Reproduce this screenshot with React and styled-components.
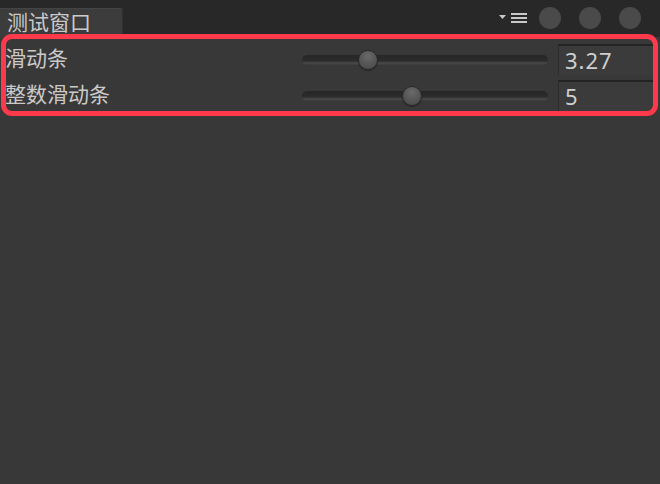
import React from "react";
import styled, { createGlobalStyle } from "styled-components";

const GlobalStyle = createGlobalStyle`
  html, body {
    margin: 0;
    padding: 0;
    background: #383838;
  }
  body {
    font-family: "Noto Sans", "Noto Sans CJK SC", sans-serif;
  }
`;

const Window = styled.div`
  position: relative;
  width: 660px;
  height: 484px;
  background: #383838;
  overflow: hidden;
`;

const Header = styled.div`
  height: 37px;
  background: #282828;
  display: flex;
  align-items: flex-end;
  justify-content: space-between;
`;

const Tab = styled.div`
  width: 123px;
  height: 29px;
  background: #3c3c3c;
  border-top: 1px solid #444;
  border-right: 1px solid #303030;
  border-top-right-radius: 3px;
  box-sizing: border-box;
  display: flex;
  align-items: center;
  padding-left: 7px;
  padding-bottom: 4px;
  color: #cacaca;
  font-size: 21px;
  line-height: 1;
  font-family: "Noto Sans CJK SC", sans-serif;
`;

const Controls = styled.div`
  display: flex;
  align-items: center;
  gap: 18px;
  height: 37px;
  padding-right: 19px;
  padding-bottom: 2px;
  box-sizing: border-box;
`;

const MenuIcon = styled.svg`
  margin-right: -6px;
`;

const Dot = styled.div`
  width: 22px;
  height: 22px;
  border-radius: 50%;
  background: #4a4a4a;
`;

const Rows = styled.div`
  display: flex;
  flex-direction: column;
  gap: 5px;
  padding-top: 7px;
`;

const Row = styled.div`
  display: flex;
  align-items: center;
  height: 31px;
`;

const Label = styled.div`
  width: 302px;
  padding-left: 5px;
  padding-bottom: 4px;
  box-sizing: border-box;
  color: #cacaca;
  font-size: 21px;
  line-height: 1;
  font-family: "Noto Sans CJK SC", sans-serif;
`;

const Track = styled.div`
  position: relative;
  width: 246px;
  height: 10px;
  border-radius: 5px;
  background: linear-gradient(#262626 0%, #2c2c2c 60%, #4a4a4a 80%, #3a3a3a 100%);
`;

const Thumb = styled.div`
  position: absolute;
  top: 50%;
  width: 20px;
  height: 20px;
  margin-left: -10px;
  margin-top: -10px;
  border-radius: 50%;
  box-sizing: border-box;
  border: 1px solid #2a2a2a;
  background: radial-gradient(circle at 50% 30%, #6a6a6a 0%, #555 55%, #474747 100%);
  box-shadow: 0 1px 1px rgba(0, 0, 0, 0.4);
`;

const Field = styled.div`
  margin-left: 10px;
  width: 97px;
  height: 31px;
  box-sizing: border-box;
  background: #3b3b3b;
  border-top: 2px solid #232323;
  border-left: 1px solid #2a2a2a;
  padding-left: 6px;
  padding-bottom: 2px;
  display: flex;
  align-items: center;
  color: #cfcfcf;
  font-size: 22px;
  letter-spacing: 1px;
  font-family: "Noto Sans", sans-serif;
`;

const Highlight = styled.div`
  position: absolute;
  left: 1px;
  top: 34px;
  width: 657px;
  height: 82px;
  box-sizing: border-box;
  border: 5px solid #fd3a4b;
  border-radius: 11px;
  pointer-events: none;
`;

const sliders = [
  { label: "滑动条", value: "3.27", pos: 0.248 },
  { label: "整数滑动条", value: "5", pos: 0.442 },
];

const App = () => {
  return (
    <>
      <GlobalStyle />
      <Window>
        <Header>
          <Tab>测试窗口</Tab>
          <Controls>
            <MenuIcon width="28" height="12" viewBox="0 0 28 12">
              <polygon points="0,3 7,3 3.5,7" fill="#c8c8c8" />
              <rect x="12" y="1" width="16" height="2" fill="#c8c8c8" />
              <rect x="12" y="5" width="16" height="2" fill="#c8c8c8" />
              <rect x="12" y="9" width="16" height="2" fill="#c8c8c8" />
            </MenuIcon>
            <Dot />
            <Dot />
            <Dot />
          </Controls>
        </Header>
        <Rows>
          {sliders.map((s) => (
            <Row key={s.label}>
              <Label>{s.label}</Label>
              <Track>
                <Thumb style={{ left: `${10 + s.pos * 226}px` }} />
              </Track>
              <Field>{s.value}</Field>
            </Row>
          ))}
        </Rows>
        <Highlight />
      </Window>
    </>
  );
};

export default App;
